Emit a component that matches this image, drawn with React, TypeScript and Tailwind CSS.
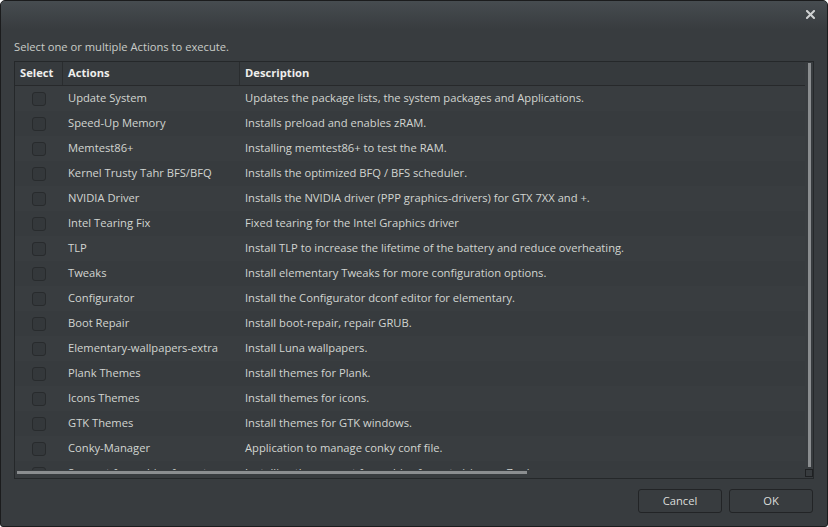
import React from "react";

const rows: [string, string][] = [
  ["Update System", "Updates the package lists, the system packages and Applications."],
  ["Speed-Up Memory", "Installs preload and enables zRAM."],
  ["Memtest86+", "Installing memtest86+ to test the RAM."],
  ["Kernel Trusty Tahr BFS/BFQ", "Installs the optimized BFQ / BFS scheduler."],
  ["NVIDIA Driver", "Installs the NVIDIA driver (PPP graphics-drivers) for GTX 7XX and +."],
  ["Intel Tearing Fix", "Fixed tearing for the Intel Graphics driver"],
  ["TLP", "Install TLP to increase the lifetime of the battery and reduce overheating."],
  ["Tweaks", "Install elementary Tweaks for more configuration options."],
  ["Configurator", "Install the Configurator dconf editor for elementary."],
  ["Boot Repair", "Install boot-repair, repair GRUB."],
  ["Elementary-wallpapers-extra", "Install Luna wallpapers."],
  ["Plank Themes", "Install themes for Plank."],
  ["Icons Themes", "Install themes for icons."],
  ["GTK Themes", "Install themes for GTK windows."],
  ["Conky-Manager", "Application to manage conky conf file."],
  ["Support for archive formats", "Installing the support for archive formats (zip, rar, 7z...)"],
];

export default function App() {
  return (
    <div
      className="w-[828px] h-[527px] flex flex-col border border-[#1b1c1d] rounded-t-[5px] rounded-b-[3px] bg-[#383c3f] text-[11.2px] text-[#d2d5d1] overflow-hidden"
      style={{ fontFamily: '"Open Sans", "Noto Sans", sans-serif' }}
    >
      <div className="h-[28px] shrink-0 bg-gradient-to-b from-[#464c50] to-[#383c3f] flex justify-end items-start pt-[9px] pr-[12px]">
        <svg width="9" height="9" viewBox="0 0 9 9">
          <path d="M1 1L8 8M8 1L1 8" stroke="#cfd1d2" strokeWidth="2" strokeLinecap="square" />
        </svg>
      </div>
      <div className="h-[32px] shrink-0 px-[13px] pt-[10px] leading-[16px] text-[#c9ccc8]">
        Select one or multiple Actions to execute.
      </div>
      <div className="mx-[13px] h-[418px] shrink-0 border border-[#25282a] flex bg-[#383c3f]">
        <div className="flex-1 flex flex-col min-w-0">
          <div className="h-[24px] shrink-0 flex border-b border-[#27292b] bg-[#363a3d] font-bold text-[#eeeeec] leading-[22px]">
            <div className="w-[48px] shrink-0 border-r border-[#2a2d2f] pl-[5px]">Select</div>
            <div className="w-[177px] shrink-0 border-r border-[#2a2d2f] pl-[5px]">Actions</div>
            <div className="flex-1 pl-[5px]">Description</div>
          </div>
          <div className="flex-1 overflow-hidden">
            {rows.map(([a, d], i) => (
              <div
                key={a}
                className={`h-[25px] flex items-center whitespace-nowrap ${i % 2 === 0 ? "bg-[#393d40]" : "bg-[#373b3e]"}`}
              >
                <div className="w-[48px] shrink-0 flex justify-center">
                  <div className="w-[14px] h-[14px] rounded-[3px] bg-[#34383b] border border-[#282b2d]" />
                </div>
                <div className="w-[177px] shrink-0 pl-[5px]">{a}</div>
                <div className="flex-1 pl-[5px]">{d}</div>
              </div>
            ))}
          </div>
          <div className="h-[8px] shrink-0 flex items-start pt-[1px] pl-[2px] bg-[#383c3f]">
            <div className="w-[510px] h-[3px] bg-[#8b8e90]" />
          </div>
        </div>
        <div className="w-[8px] shrink-0 flex flex-col items-center pt-[1px] pb-[1px] bg-[#383c3f]">
          <div className="w-[3px] flex-1 bg-[#8b8e90] mb-[2px]" />
          <div className="w-[8px] h-[8px] border border-[#1f2123]" />
        </div>
      </div>
      <div className="flex justify-end gap-[7px] mt-[10px] pr-[14px]">
        <button className="w-[84px] h-[24px] rounded-[3px] border border-[#222426] bg-[#383c3f] text-[#dcdedb] leading-[22px]">
          Cancel
        </button>
        <button className="w-[84px] h-[24px] rounded-[3px] border border-[#222426] bg-[#383c3f] text-[#dcdedb] leading-[22px]">
          OK
        </button>
      </div>
    </div>
  );
}
